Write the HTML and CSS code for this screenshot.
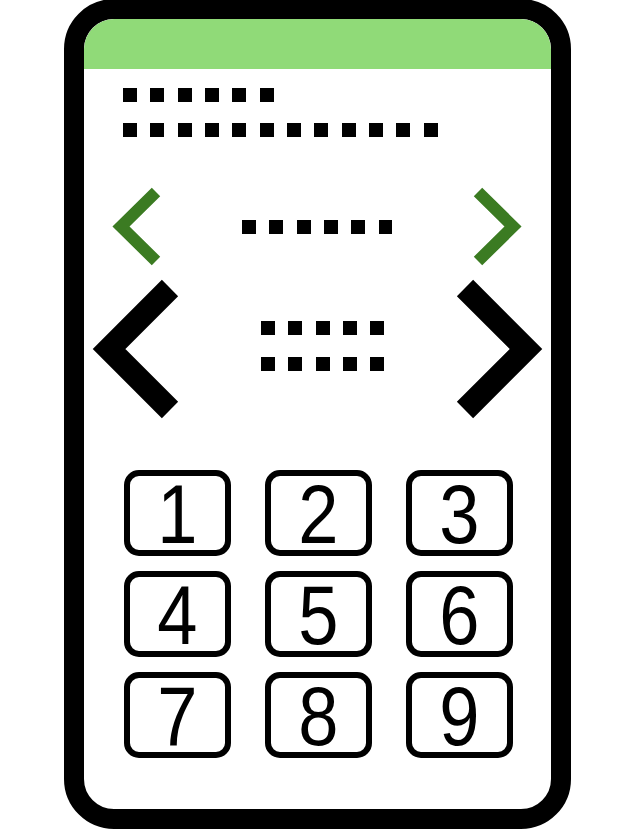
FILE: index.html
```html
<!DOCTYPE html>
<html>
<head>
<meta charset="utf-8">
<link rel="stylesheet" href="styles.css">
</head>
<body>
<div class="phone">
  <div class="screen">
    <div class="header"></div>
    <div class="dots dots-6 line1"></div>
    <div class="dots dots-12 line2"></div>
    <div class="nav nav-small">
      <svg class="chev-s" viewBox="0 0 60 82" width="60" height="82"><polyline points="50,6 15,40.5 50,75" fill="none" stroke="#3b7b22" stroke-width="12" stroke-miterlimit="10"/></svg>
      <div class="dots dots-6"></div>
      <svg class="chev-s" viewBox="0 0 60 82" width="60" height="82"><polyline points="10,6 45,40.5 10,75" fill="none" stroke="#3b7b22" stroke-width="12" stroke-miterlimit="10"/></svg>
    </div>
    <div class="nav nav-big">
      <svg class="chev-b" viewBox="0 0 94 146" width="94" height="146"><polyline points="82,12 21,73 82,134" fill="none" stroke="#000" stroke-width="23" stroke-miterlimit="10"/></svg>
      <div class="value">
        <div class="dots dots-5"></div>
        <div class="dots dots-5"></div>
      </div>
      <svg class="chev-b" viewBox="0 0 94 146" width="94" height="146"><polyline points="12,12 73,73 12,134" fill="none" stroke="#000" stroke-width="23" stroke-miterlimit="10"/></svg>
    </div>
    <div class="keypad">
      <div class="key"><span>1</span></div>
      <div class="key"><span>2</span></div>
      <div class="key"><span>3</span></div>
      <div class="key"><span>4</span></div>
      <div class="key"><span>5</span></div>
      <div class="key"><span>6</span></div>
      <div class="key"><span>7</span></div>
      <div class="key"><span>8</span></div>
      <div class="key"><span>9</span></div>
    </div>
  </div>
</div>
</body>
</html>
```
FILE: styles.css
```css
html, body {
  margin: 0;
  padding: 0;
  background: #fff;
  overflow: hidden;
}
.phone {
  box-sizing: border-box;
  width: 507px;
  height: 830px;
  margin: -1px 0 0 64px;
  border: 20px solid #000;
  border-radius: 50px;
  background: #fff;
  overflow: hidden;
}
.screen {
  display: flex;
  flex-direction: column;
  height: 100%;
  border-radius: 30px;
  overflow: hidden;
}
.header {
  height: 50px;
  background: #90da78;
  flex: none;
}
.dots {
  height: 14px;
  flex: none;
  background: repeating-linear-gradient(to right, #000 0 14px, transparent 14px 27.33px);
}
.dots-5 { width: 123.3px; }
.dots-6 { width: 150.7px; }
.dots-12 { width: 314.7px; }
.line1 { margin: 19px 0 0 39px; }
.line2 { margin: 21px 0 0 39px; }
.nav {
  display: flex;
  align-items: center;
  justify-content: space-between;
  flex: none;
}
.nav svg { display: block; flex: none; }
.nav-small {
  margin-top: 49px;
  padding: 0 23px 0 22px;
}
.nav-big {
  margin-top: 8px;
  padding: 0 4px;
}
.value {
  display: flex;
  flex-direction: column;
  gap: 22px;
  margin: 0 0 6px 11px;
}
.keypad {
  display: grid;
  grid-template-columns: repeat(3, 107px);
  grid-auto-rows: 86px;
  column-gap: 34px;
  row-gap: 15px;
  margin: 48px 0 0 40px;
}
.key {
  box-sizing: border-box;
  border: 6.5px solid #000;
  border-radius: 15px;
  display: flex;
  align-items: center;
  justify-content: center;
  font-family: "Liberation Sans", Arial, sans-serif;
  font-size: 84px;
  line-height: 1;
  color: #000;
  padding-top: 2px;
}
.key span {
  display: inline-block;
  transform: scaleX(0.86);
}
```
